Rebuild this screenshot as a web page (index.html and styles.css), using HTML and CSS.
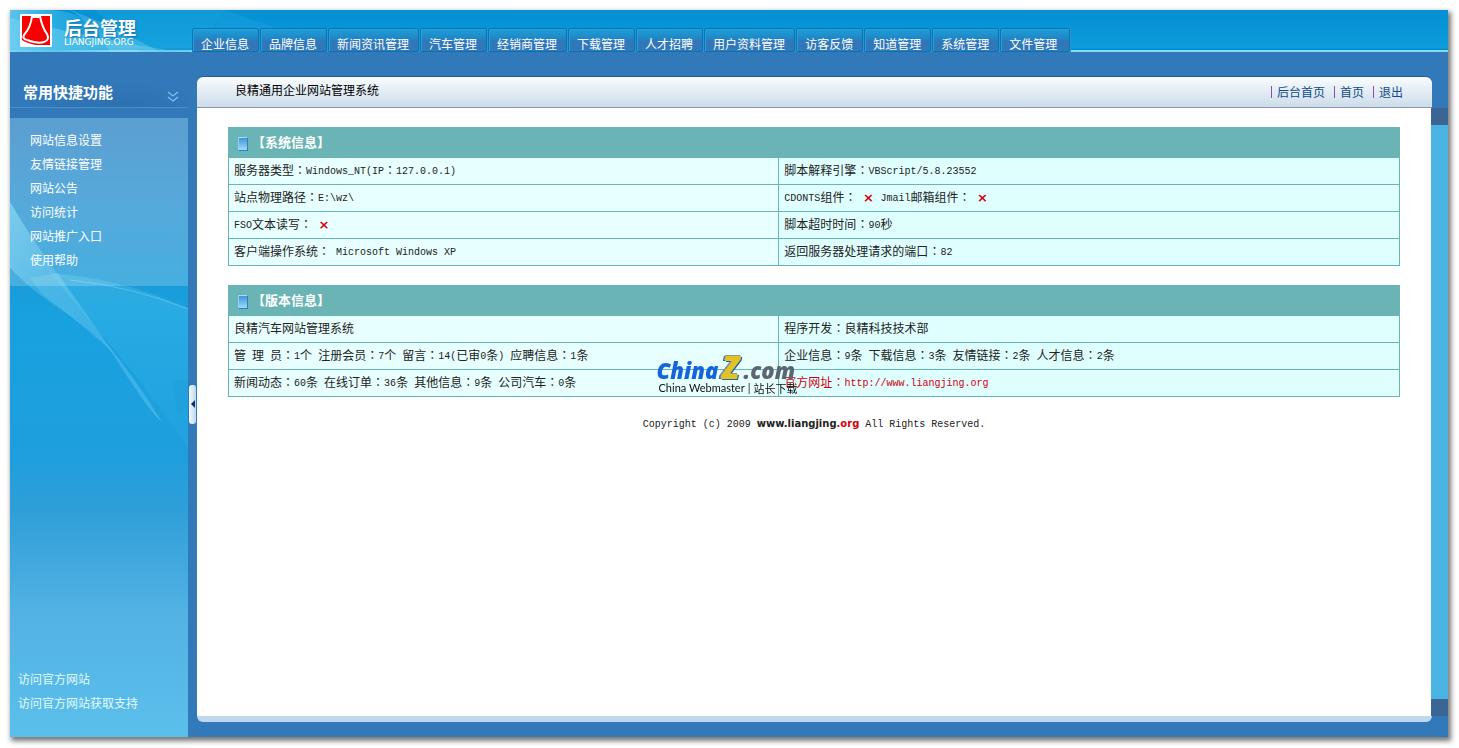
FILE: index.html
```html
<!DOCTYPE html>
<html lang="zh-CN">
<head>
<meta charset="utf-8">
<title>后台管理</title>
<link rel="stylesheet" href="styles.css">
</head>
<body>
<div class="frame">
  <header class="top">
    <svg class="top-art" width="330" height="42" viewBox="0 0 330 42" aria-hidden="true">
      <defs><linearGradient id="tg"><stop offset="0" stop-color="#6fd0f2"/><stop offset=".45" stop-color="#2fb0e4"/><stop offset="1" stop-color="#2fb0e4" stop-opacity="0"/></linearGradient></defs>
      <path d="M0 0H40Q80 0 105 42H0Z" fill="url(#tg)" opacity=".8"/>
      <path d="M0 8Q90 30 170 42H0Z" fill="#7fd8f5" opacity=".45"/>
      <path d="M85 0H215Q200 25 180 42H130Q105 20 85 0Z" fill="#2ab0e4" opacity=".3"/>
      <path d="M60 0Q95 12 150 42H100Q85 15 60 0Z" fill="#9be2f8" opacity=".25"/>
      <path d="M215 0L200 24Q250 18 300 30" fill="#3cb6e8" opacity=".2"/>
    </svg>
    <div class="brand">
      <svg width="32" height="33" viewBox="0 0 32 33" aria-hidden="true">
        <rect width="32" height="33" rx="1" fill="#fff"/>
        <rect x="2" y="2" width="28" height="29" fill="#f80000"/>
        <path d="M12 2Q11 13 4 21Q2 25 7 26" fill="none" stroke="#fff" stroke-width="2"/>
        <path d="M20 2Q22 13 27 20Q30 26 24 28Q18 30 7 26" fill="none" stroke="#fff" stroke-width="2"/>
        <path d="M11 2H21L19 4H13Z" fill="#fff"/>
        <path d="M2 26Q6 29 16 31H2Z" fill="#fff"/>
      </svg>
      <div class="brand-text"><strong>后台管理</strong><span>LIANGJING.ORG</span></div>
    </div>
    <nav class="tabs">
      <a href="#">企业信息</a><a href="#">品牌信息</a><a href="#">新闻资讯管理</a><a href="#">汽车管理</a><a href="#">经销商管理</a><a href="#">下载管理</a><a href="#">人才招聘</a><a href="#">用户资料管理</a><a href="#">访客反馈</a><a href="#">知道管理</a><a href="#">系统管理</a><a href="#">文件管理</a>
    </nav>
  </header>
  <div class="body">
    <aside class="side">
      <h2>常用快捷功能
        <svg width="12" height="11" viewBox="0 0 12 11" fill="none" stroke="#7cc4f0" stroke-width="1.3" aria-hidden="true"><path d="M1 1L6 5L11 1M1 6L6 10L11 6"/></svg>
      </h2>
      <div class="side-body">
        <svg class="side-art" viewBox="0 0 178 619" preserveAspectRatio="none" aria-hidden="true">
          <defs>
            <linearGradient id="a" x1="0" y1="0" x2="1" y2="1"><stop offset="0" stop-color="#6fd4f3" stop-opacity=".7"/><stop offset=".5" stop-color="#5cc4ee" stop-opacity=".35"/><stop offset="1" stop-color="#5cc4ee" stop-opacity=".1"/></linearGradient>
            <linearGradient id="b" x1="0" y1="0" x2="0" y2="1"><stop offset="0" stop-color="#43bbe9" stop-opacity=".5"/><stop offset="1" stop-color="#36b4ea" stop-opacity=".1"/></linearGradient>
          </defs>
          <path d="M40 155Q110 160 178 190V330Q130 260 90 215Z" fill="url(#b)"/>
          <path d="M0 84Q30 135 65 180Q88 211 104 236Q85 214 60 198Q25 176 0 150Z" fill="url(#a)"/>
          <path d="M48 155Q75 195 104 236Q80 213 32 176L20 160Z" fill="#8bd6f3" opacity=".25"/>
          <path d="M94 222Q126 261 152 304Q140 296 94 222Z" fill="#8bdcf8" opacity=".3"/>
          <path d="M60 162Q120 168 178 191" fill="none" stroke="#7fd4f5" stroke-width="1" opacity=".5"/>
          <path d="M162 261L178 263V290L168 295Z" fill="#1793d2" opacity=".2"/>
        </svg>
        <ul class="menu">
          <li><a href="#">网站信息设置</a></li><li><a href="#">友情链接管理</a></li><li><a href="#">网站公告</a></li><li><a href="#">访问统计</a></li><li><a href="#">网站推广入口</a></li><li><a href="#">使用帮助</a></li>
        </ul>
        <div class="support"><a href="#">访问官方网站</a><a href="#">访问官方网站获取支持</a></div>
      </div>
    </aside>
    <div class="split"><button type="button" aria-label="收起侧栏"><svg width="5" height="8" viewBox="0 0 5 8"><path d="M5 0V8L1 4Z" fill="#0b2f66"/></svg></button></div>
    <main class="panel">
      <div class="panel-head">
        <h1>良精通用企业网站管理系统</h1>
        <div class="links"><a href="#">后台首页</a><a href="#">首页</a><a href="#">退出</a></div>
      </div>
      <div class="panel-mid">
        <div class="content">
          <table>
            <colgroup><col class="c1"><col></colgroup>
            <thead><tr><th colspan="2"><i class="mark"></i>【系统信息】</th></tr></thead>
            <tbody>
              <tr><td>服务器类型<span class="k" lang="zh-TW">：</span><span class="m">Windows_NT(IP</span><span class="k" lang="zh-TW">：</span><span class="m">127.0.0.1)</span></td><td>脚本解释引擎<span class="k" lang="zh-TW">：</span><span class="m">VBScript/5.8.23552</span></td></tr>
              <tr><td>站点物理路径<span class="k" lang="zh-TW">：</span><span class="m">E:\wz\</span></td><td><span class="m">CDONTS</span>组件<span class="k" lang="zh-TW">：</span><b class="no">×</b><span class="m">Jmail</span>邮箱组件<span class="k" lang="zh-TW">：</span><b class="no">×</b></td></tr>
              <tr><td><span class="m">FSO</span>文本读写<span class="k" lang="zh-TW">：</span><b class="no">×</b></td><td>脚本超时时间<span class="k" lang="zh-TW">：</span><span class="m">90</span>秒</td></tr>
              <tr><td>客户端操作系统<span class="k" lang="zh-TW">：</span><span class="m"> Microsoft Windows XP</span></td><td>返回服务器处理请求的端口<span class="k" lang="zh-TW">：</span><span class="m">82</span></td></tr>
            </tbody>
          </table>
          <table>
            <colgroup><col class="c1"><col></colgroup>
            <thead><tr><th colspan="2"><i class="mark"></i>【版本信息】</th></tr></thead>
            <tbody>
              <tr><td>良精汽车网站管理系统</td><td>程序开发<span class="k" lang="zh-TW">：</span>良精科技技术部</td></tr>
              <tr><td>管<span class="m"> </span>理<span class="m"> </span>员<span class="k" lang="zh-TW">：</span><span class="m">1</span>个<span class="m"> </span>注册会员<span class="k" lang="zh-TW">：</span><span class="m">7</span>个<span class="m"> </span>留言<span class="k" lang="zh-TW">：</span><span class="m">14(</span>已审<span class="m">0</span>条<span class="m">) </span>应聘信息<span class="k" lang="zh-TW">：</span><span class="m">1</span>条</td><td>企业信息<span class="k" lang="zh-TW">：</span><span class="m">9</span>条<span class="m"> </span>下载信息<span class="k" lang="zh-TW">：</span><span class="m">3</span>条<span class="m"> </span>友情链接<span class="k" lang="zh-TW">：</span><span class="m">2</span>条<span class="m"> </span>人才信息<span class="k" lang="zh-TW">：</span><span class="m">2</span>条</td></tr>
              <tr><td>新闻动态<span class="k" lang="zh-TW">：</span><span class="m">60</span>条<span class="m"> </span>在线订单<span class="k" lang="zh-TW">：</span><span class="m">36</span>条<span class="m"> </span>其他信息<span class="k" lang="zh-TW">：</span><span class="m">9</span>条<span class="m"> </span>公司汽车<span class="k" lang="zh-TW">：</span><span class="m">0</span>条</td><td><a class="site" href="#">官方网址<span class="k" lang="zh-TW">：</span><span class="m">http://www.liangjing.org</span></a></td></tr>
            </tbody>
          </table>
          <p class="copy"><span class="m">Copyright (c) 2009 </span><a href="#">www.liangjing<span>.org</span></a><span class="m"> All Rights Reserved.</span></p>
        </div>
        <div class="strip"></div>
      </div>
      <div class="panel-foot"></div>
    </main>
  </div>
</div>
<div class="overlay">
  <div class="chinaz">
    <div class="cz-name"><span class="cz-a">China</span><span class="cz-z">Z</span><span class="cz-c">.com</span></div>
    <div class="cz-sub"><span>China Webmaster</span><span class="cz-bar">|</span><small>站长下载</small></div>
  </div>
</div>
</body>
</html>
```

FILE: styles.css
```css
* { box-sizing: border-box; }
body {
  margin: 0;
  min-height: 100vh;
  display: flex;
  padding: 10px 11px 11px 10px;
  background: #fff;
  font: 12px/24px "Noto Sans CJK SC", sans-serif;
  color: #222;
}
a { color: inherit; text-decoration: none; }
.frame {
  flex: 1;
  display: flex;
  flex-direction: column;
  background: #3279b9;
  box-shadow: 2px 3px 5px 1px #777;
}

.top {
  position: relative;
  display: flex;
  height: 42px;
  background: linear-gradient(#0490d3, #0d9bdc 38px, #078ccb 39px, #078ccb 40px, #84dbf5 40px);
}
.top-art { position: absolute; left: 0; top: 0; }
.brand { position: relative; display: flex; width: 182px; padding: 4px 0 0 10px; gap: 12px; color: #fff; }
.brand-text { display: flex; flex-direction: column; padding-top: 2px; }
.brand-text strong { font-size: 18px; line-height: 22px; font-weight: 700; text-shadow: 1px 1px 2px #1273a8; }
.brand-text span { font: 9px/8px "DejaVu Sans", sans-serif; }
.tabs { position: relative; display: flex; align-self: flex-end; }
.tabs a {
  height: 24px;
  margin-right: 1px;
  padding: 3px 9px 0 8px;
  border: 1px solid #0873b4;
  box-shadow: inset 1px 1px #25a2d9, 1px 0 #2a95ce;
  border-radius: 2px 2px 0 0;
  background: linear-gradient(#1b9fd8, #2382c2 11px, #3076b8 12px, #3279b9);
  color: #fff;
}
.tabs a:last-child { padding-right: 12px; }

.body { flex: 1; display: flex; padding-top: 25px; }
.side { width: 178px; display: flex; flex-direction: column; }
.side h2 {
  display: flex;
  justify-content: space-between;
  align-items: center;
  height: 31px;
  margin: 0 0 10px;
  padding: 0 9px 0 13px;
  border-bottom: 1px solid #458fcd;
  background: radial-gradient(ellipse at 60% 100%, #2c70b0, #3279b9 60%);
  color: #fff;
  font-size: 15px;
}
.side h2 svg { margin-top: 8px; }
.side-body {
  position: relative;
  flex: 1;
  display: flex;
  flex-direction: column;
  justify-content: space-between;
  background: linear-gradient(#3487c6, #2c94d2 14%, #1a9bd8 26%, #18a1df 32%, #1f9fdd 55%, #2e9ed8 63%, #52b2e4 80%, #5bbfeb);
}
.side-art { position: absolute; left: 0; top: 0; width: 100%; height: 100%; }
.menu {
  position: relative;
  list-style: none;
  margin: 0;
  padding: 10px 20px 14px;
  background: rgba(255, 255, 255, 0.2);
  color: #fff;
}
.menu a, .support a { display: block; }
.support { position: relative; padding: 0 8px 22px; color: #e4fbff; }

.split { width: 9px; display: flex; align-items: center; justify-content: center; padding-bottom: 6px; }
.split button {
  display: grid;
  place-items: center;
  width: 7px;
  height: 39px;
  padding: 0;
  border: 0;
  border-radius: 3px;
  background: linear-gradient(90deg, #f2faff, #bdd8ee);
}

.panel { flex: 1; min-width: 0; display: flex; flex-direction: column; padding-bottom: 15px; }
.panel-head {
  display: flex;
  justify-content: space-between;
  height: 31px;
  margin-right: 16px;
  padding: 0 29px 0 38px;
  border-bottom: 1px solid #8698a9;
  border-radius: 6px 6px 0 0;
  background: linear-gradient(#f8fcfd, #cddceb);
  box-shadow: 0 -1px #255f98;
}
.panel-head h1 { margin: 0; font-size: 12px; line-height: 26px; font-weight: 400; color: #000; }
.links { display: flex; gap: 9px; line-height: 30px; color: #114a8a; }
.links a { display: flex; align-items: center; gap: 5px; }
.links a::before { content: ""; width: 1px; height: 12px; background: #8a50a8; }
.panel-mid { flex: 1; display: flex; }
.content { flex: 1; padding: 19px 31px; background: #fff; }
.strip {
  width: 17px;
  border: solid #3a6595;
  border-width: 17px 0;
  background: #4cb4e3;
}
.panel-foot { height: 6px; margin-right: 16px; border-radius: 0 0 6px 6px; background: #c1d7ee; }

table { width: 100%; margin-bottom: 19px; border-collapse: collapse; table-layout: fixed; }
.c1 { width: 47%; }
th, td { border: 1px solid #6ab4b5; padding: 0 5px 2px; text-align: left; white-space: nowrap; }
th { height: 30px; padding: 0 9px 2px; background: #6ab4b5; color: #fff; font-size: 13px; line-height: 26px; }
td { height: 27px; background: #dfffff; line-height: 22px; }
td:first-child { background: #e8ffff; }
th .mark {
  display: inline-block;
  width: 10px;
  height: 14px;
  margin-right: 4px;
  border: 1px solid;
  border-color: #a5daf5 #2f7fc0 #2f7fc0 #8fd2f5;
  background: linear-gradient(#3d96d4, #9cdcfb);
  vertical-align: -4px;
}
.m { font: 10px/1 "Liberation Mono", monospace; white-space: pre; vertical-align: 1px; }
.k { font-family: "Noto Sans CJK TC", sans-serif; }
.no { display: inline-block; width: 24px; text-align: center; color: #d4000c; font: bold 13px/1 "DejaVu Sans", sans-serif; }
.site { color: #d4000c; }
.copy { margin: 0; line-height: 14px; text-align: center; }
.copy a { font: bold 10px/14px "DejaVu Sans", sans-serif; vertical-align: 1px; }
.copy a span { color: #d4000c; }

.overlay { position: fixed; inset: 0; display: grid; place-items: center; pointer-events: none; }
.chinaz { width: 146px; white-space: nowrap; }
.cz-name { display: flex; align-items: baseline; font: italic 800 22px/24px "Open Sans", sans-serif; }
.cz-a { color: #1464dc; }
.cz-z { margin: 0 4px; font-size: 32px; color: #e2c322; text-shadow: -1px -1px #8c979c, -2px 0 #2264a4, 1px 1px #2264a4; }
.cz-c { color: #5b6670; }
.cz-sub { display: flex; gap: 3px; padding-left: 2px; font: 11px/12px Lato, sans-serif; color: #111; }
.cz-sub small { font: 11px/12px "Noto Sans CJK SC", sans-serif; }
```
